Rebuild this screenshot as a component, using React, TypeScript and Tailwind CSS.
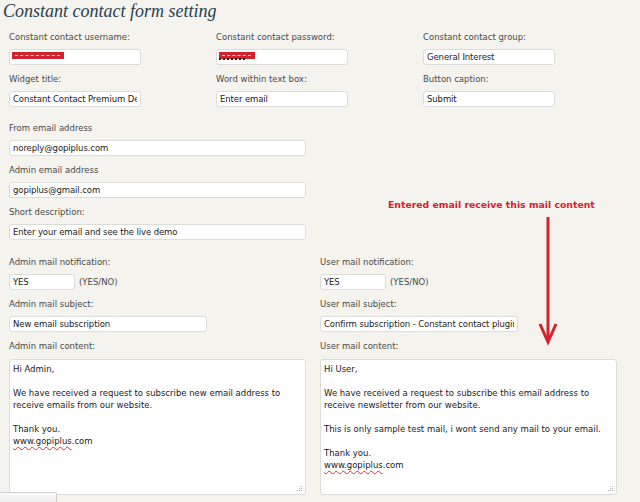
const labelCls = "block h-[12px] text-[8.5px] leading-[12px] text-[#4a4a4a]";
const inputCls =
  "block h-[16px] mt-[6px] rounded-[3px] border border-[#dcdcd8] bg-white px-[3px] text-[8.5px] leading-[14px] text-[#222] outline-none font-['DejaVu_Sans',Verdana,sans-serif] tracking-[-0.1px]";

const Field = ({ label, value, width }: { label: string; value: string; width: string }) => (
  <div>
    <label className={labelCls}>{label}</label>
    <input readOnly value={value} className={`${inputCls} ${width}`} />
  </div>
);

const Redacted = ({ w, dots }: { w: string; dots?: boolean }) => (
  <div className="mt-[6px] h-[16px] w-[132px] rounded-[3px] border border-[#dcdcd8] bg-white pl-[2px] pt-[2px]">
    <div className={`relative h-[7px] ${w} bg-[#d3222e]`}>
      <div className="absolute left-[3px] right-[4px] top-[3px] border-t border-dashed border-white/80" />
      {dots && (
        <div className="absolute left-0 top-[6px] w-[26px] border-t-2 border-dotted border-[#222]" />
      )}
    </div>
  </div>
);

const MailBox = ({ lines }: { lines: string[] }) => (
  <div className="relative mt-[7px] h-[136px] w-[297px] rounded-[3px] border border-[#dcdcd8] bg-white px-[3px] pt-[3px] text-[8.5px] leading-[12px] text-[#222]">
    {lines.map((l, i) =>
      l === "" ? (
        <div key={i} className="h-[12px]" />
      ) : l.startsWith("www.") ? (
        <div key={i}>
          <span className="underline decoration-wavy decoration-[#d33] decoration-[1px] underline-offset-2">
            www.gopiplus
          </span>
          .com
        </div>
      ) : (
        <div key={i}>{l}</div>
      )
    )}
    <svg className="absolute bottom-[2px] right-[2px]" width="6" height="6" viewBox="0 0 6 6">
      <rect x="4" y="0" width="1" height="1" fill="#aaa" />
      <rect x="2" y="2" width="1" height="1" fill="#aaa" />
      <rect x="4" y="2" width="1" height="1" fill="#aaa" />
      <rect x="0" y="4" width="1" height="1" fill="#aaa" />
      <rect x="2" y="4" width="1" height="1" fill="#aaa" />
      <rect x="4" y="4" width="1" height="1" fill="#aaa" />
    </svg>
  </div>
);

const App = () => {
  return (
    <div className="relative h-[502px] w-[640px] overflow-hidden bg-[#f4f3ee] font-['DejaVu_Sans',Verdana,sans-serif]">
      <h2 className="pl-[3px] pt-[1px] font-['Liberation_Serif',serif] text-[18px] italic leading-[21px] text-[#2b3f4f]">
        Constant contact form setting
      </h2>

      <div className="pl-[9px]">
        <div className="mt-[9px] grid grid-cols-[207px_207px_207px] gap-y-[8px]">
          <div>
            <label className={labelCls}>Constant contact username:</label>
            <Redacted w="w-[52px]" />
          </div>
          <div>
            <label className={labelCls}>Constant contact password:</label>
            <Redacted w="w-[36px]" dots />
          </div>
          <Field label="Constant contact group:" value="General Interest" width="w-[132px]" />
          <Field label="Widget title:" value="Constant Contact Premium Demo" width="w-[132px]" />
          <Field label="Word within text box:" value="Enter email" width="w-[132px]" />
          <Field label="Button caption:" value="Submit" width="w-[132px]" />
        </div>

        <div className="mt-[15px] flex flex-col gap-[8px]">
          <Field label="From email address" value="noreply@gopiplus.com" width="w-[297px]" />
          <Field label="Admin email address" value="gopiplus@gmail.com" width="w-[297px]" />
          <Field label="Short description:" value="Enter your email and see the live demo" width="w-[297px]" />
        </div>

        <div className="mt-[16px] grid grid-cols-[311px_311px]">
          <div className="flex flex-col gap-[8px]">
            <div>
              <label className={labelCls}>Admin mail notification:</label>
              <div className="flex items-end gap-[4px]">
                <input readOnly value="YES" className={`${inputCls} w-[66px]`} />
                <span className="text-[8.5px] leading-[16px] text-[#4a4a4a]">(YES/NO)</span>
              </div>
            </div>
            <Field label="Admin mail subject:" value="New email subscription" width="w-[198px]" />
            <div>
              <label className={labelCls}>Admin mail content:</label>
              <MailBox
                lines={[
                  "Hi Admin,",
                  "",
                  "We have received a request to subscribe new email address to",
                  "receive emails from our website.",
                  "",
                  "Thank you.",
                  "www.gopiplus.com",
                ]}
              />
            </div>
          </div>
          <div className="flex flex-col gap-[8px]">
            <div>
              <label className={labelCls}>User mail notification:</label>
              <div className="flex items-end gap-[4px]">
                <input readOnly value="YES" className={`${inputCls} w-[66px]`} />
                <span className="text-[8.5px] leading-[16px] text-[#4a4a4a]">(YES/NO)</span>
              </div>
            </div>
            <Field
              label="User mail subject:"
              value="Confirm subscription - Constant contact plugin plugin"
              width="w-[198px]"
            />
            <div>
              <label className={labelCls}>User mail content:</label>
              <MailBox
                lines={[
                  "Hi User,",
                  "",
                  "We have received a request to subscribe this email address to",
                  "receive newsletter from our website.",
                  "",
                  "This is only sample test mail, i wont send any mail to your email.",
                  "",
                  "Thank you.",
                  "www.gopiplus.com",
                ]}
              />
            </div>
          </div>
        </div>
      </div>

      {/* annotation overlay */}
      <div className="absolute left-[388px] top-[199px] text-[9.3px] font-bold leading-[12px] text-[#d3222e]">
        Entered email receive this mail content
      </div>
      <svg className="absolute left-[538px] top-[216px]" width="22" height="130" viewBox="0 0 22 130">
        <line x1="10" y1="1" x2="10" y2="124" stroke="#d3222e" strokeWidth="3" />
        <polyline points="2,108 10,126 18,108" fill="none" stroke="#d3222e" strokeWidth="3" strokeLinejoin="miter" />
      </svg>

      <div className="absolute bottom-0 left-0 h-[10px] w-[57px] rounded-tr-[2px] border-r border-t border-[#cfcfcf] bg-gradient-to-b from-[#fafafa] to-[#ececec]" />
    </div>
  );
};

export default App;
